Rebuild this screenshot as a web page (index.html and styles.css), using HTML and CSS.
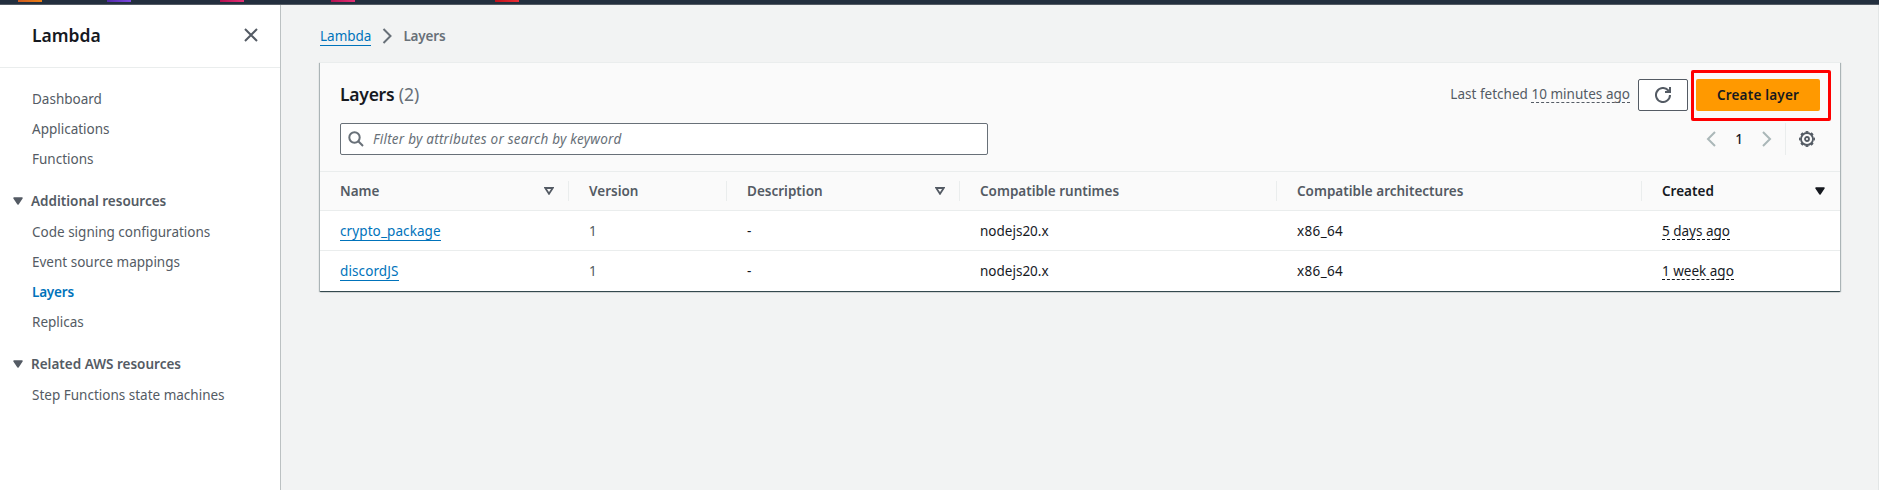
FILE: index.html
```html
<!DOCTYPE html>
<html lang="en">
<head>
<meta charset="utf-8">
<title>Layers - Lambda</title>
<link rel="stylesheet" href="styles.css">
</head>
<body>
<header class="topbar">
  <i class="service orange"></i><i class="service purple"></i><i class="service pink first"></i><i class="service pink"></i><i class="service red"></i>
</header>
<div class="layout">
  <aside class="sidebar">
    <div class="side-head">
      <h2 class="side-title">Lambda</h2>
      <svg class="close" width="16" height="16" viewBox="0 0 16 16"><path d="M2 2l12 12M14 2L2 14"/></svg>
    </div>
    <nav class="nav">
      <ul class="group">
        <li>Dashboard</li>
        <li>Applications</li>
        <li>Functions</li>
      </ul>
      <h3 class="section"><svg width="10" height="8" viewBox="0 0 10 8"><path d="M1 1h8L5 7z"/></svg>Additional resources</h3>
      <ul class="group">
        <li>Code signing configurations</li>
        <li>Event source mappings</li>
        <li class="active">Layers</li>
        <li>Replicas</li>
      </ul>
      <h3 class="section"><svg width="10" height="8" viewBox="0 0 10 8"><path d="M1 1h8L5 7z"/></svg>Related AWS resources</h3>
      <ul class="group">
        <li>Step Functions state machines</li>
      </ul>
    </nav>
  </aside>
  <main class="main">
    <div class="crumbs">
      <a class="link crumb-link">Lambda</a>
      <svg class="crumb-sep" width="16" height="16" viewBox="0 0 16 16"><path d="M4.5 1l7 7-7 7"/></svg>
      <span class="crumb-current">Layers</span>
    </div>
    <section class="card">
      <div class="card-head">
        <div class="row title-row">
          <h1 class="title">Layers <span class="count">(2)</span></h1>
          <div class="actions">
            <span class="fetched">Last fetched <span class="dashed">10 minutes ago</span></span>
            <button class="btn refresh"><svg width="16" height="16" viewBox="0 0 16 16"><path d="M15 8a7 7 0 1 1-1.9-4.8L15 5M15 0v5h-5"/></svg></button>
            <div class="create-wrap"><button class="btn create">Create layer</button><span class="highlight"></span></div>
          </div>
        </div>
        <div class="row filter-row">
          <div class="search">
            <svg width="16" height="16" viewBox="0 0 16 16"><circle cx="6.500" cy="6.500" r="5.200"/><path d="M10.300 10.300l4.700 4.700"/></svg>
            <span class="placeholder">Filter by attributes or search by keyword</span>
          </div>
          <div class="pager">
            <svg class="arrow" width="16" height="16" viewBox="0 0 16 16"><path d="M12 1L5 8l7 7"/></svg>
            <span class="page">1</span>
            <svg class="arrow" width="16" height="16" viewBox="0 0 16 16"><path d="M5 1l7 7-7 7"/></svg>
            <span class="settings"><svg width="16" height="16" viewBox="0 0 16 16"><circle cx="8" cy="8" r="6"/><circle class="teeth" cx="8" cy="8" r="7.200" pathLength="16"/><circle cx="8" cy="8" r="2"/></svg></span>
          </div>
        </div>
      </div>
      <div class="grid thead">
        <div class="th">Name<svg class="sort" width="10" height="8" viewBox="0 0 10 8"><path d="M1.200 1h7.600L5 6.800z"/></svg></div>
        <div class="th">Version</div>
        <div class="th">Description<svg class="sort" width="10" height="8" viewBox="0 0 10 8"><path d="M1.200 1h7.600L5 6.800z"/></svg></div>
        <div class="th">Compatible runtimes</div>
        <div class="th">Compatible architectures</div>
        <div class="th sorted">Created<svg class="sort" width="10" height="8" viewBox="0 0 10 8"><path d="M1 1h8L5 7z"/></svg></div>
      </div>
      <div class="grid tr">
        <div class="td"><a class="link">crypto_package</a></div>
        <div class="td muted">1</div>
        <div class="td">-</div>
        <div class="td">nodejs20.x</div>
        <div class="td arch">x86_64</div>
        <div class="td"><span class="dashed">5 days ago</span></div>
      </div>
      <div class="grid tr">
        <div class="td"><a class="link">discordJS</a></div>
        <div class="td muted">1</div>
        <div class="td">-</div>
        <div class="td">nodejs20.x</div>
        <div class="td arch">x86_64</div>
        <div class="td"><span class="dashed">1 week ago</span></div>
      </div>
    </section>
  </main>
</div>
</body>
</html>
```
FILE: styles.css
```css
* { box-sizing: border-box; }
body {
  margin: 0;
  height: 490px;
  overflow: hidden;
  display: flex;
  flex-direction: column;
  background: #f2f3f3;
  color: #16191f;
  font: 13.5px/20px "Noto Sans", "Open Sans", sans-serif;
}
h1, h2, h3, ul { margin: 0; padding: 0; list-style: none; }
svg { display: block; flex: none; fill: none; stroke: #545b64; stroke-width: 2; }

.topbar { flex: none; height: 5px; display: flex; background: #232f3e; border-bottom: 1px solid #545b64; }
.service { width: 24px; height: 2px; }
.orange { margin-left: 18px; background: linear-gradient(90deg, #cc5a20, #ec7f13); }
.purple { margin-left: 65px; background: linear-gradient(90deg, #5029a8, #7b48df); }
.pink { margin-left: 87px; background: linear-gradient(90deg, #b3104f, #e52f74); }
.pink.first { margin-left: 89px; }
.red { margin-left: 140px; background: linear-gradient(90deg, #bd1019, #ec2d35); }

.layout { flex: 1; display: flex; min-height: 0; }
.sidebar { flex: none; width: 281px; background: #fff; border-right: 1px solid #bcc1c2; }
.side-head { height: 63px; display: flex; justify-content: space-between; align-items: center; padding: 0 21px 2px 32px; border-bottom: 1px solid #eaeded; }
.side-title { font-size: 17.5px; letter-spacing: 0; font-weight: 600; }
.nav { padding-top: 21px; color: #545b64; }
.group { padding-left: 32px; }
.group li { height: 30px; line-height: 20px; padding-bottom: 10px; }
.active { color: #0073bb; font-weight: 600; letter-spacing: -0.2px; }
.section { display: flex; align-items: center; gap: 8px; margin: 12px 0 11px; padding-left: 13px; height: 20px; font-size: 13.5px; font-weight: 600; letter-spacing: 0; }
.section svg, .sorted svg { fill: #545b64; stroke-width: 1.5; stroke-linejoin: round; }

.main { flex: 1; padding: 21px 38px 0 39px; border-right: 1px solid #e3e6e6; }
.crumbs { display: flex; align-items: center; height: 20px; color: #687078; }
.crumb-sep { margin: 0 8px 0 8px; stroke: #687078; }
.crumb-current { font-weight: 600; letter-spacing: -0.2px; }
.link { color: #0073bb; border-bottom: 1px solid #0073bb; line-height: 18px; height: 19px; display: inline-block; }

.card { margin-top: 16px; background: #fff; border-top: 1px solid #eaeded; box-shadow: 0 1px 1px 0 rgba(0, 28, 36, .3), 1px 1px 1px 0 rgba(0, 28, 36, .25), -1px 1px 1px 0 rgba(0, 28, 36, .25), 0 1px 0 0 #879090; }
.card-head { height: 109px; padding: 16px 20px 0; background: #fafafa; border-bottom: 1px solid #eaeded; }
.row { display: flex; align-items: center; justify-content: space-between; height: 32px; }
.filter-row { margin-top: 12px; }
.title { margin-bottom: 2px; font-size: 17.5px; font-weight: 600; letter-spacing: -0.25px; }
.count { font-weight: 400; color: #687078; letter-spacing: 0; }
.actions { display: flex; align-items: center; }
.fetched { color: #545b64; margin: 0 8px 2px 0; letter-spacing: 0.02px; }
.dashed { display: inline-block; height: 18px; line-height: 18px; border-bottom: 1px dashed currentColor; }
.btn { height: 32px; border-radius: 2px; font: inherit; display: flex; align-items: center; justify-content: center; padding: 0; }
.refresh { width: 50px; border: 1px solid #545b64; background: #fff; }
.create-wrap { position: relative; margin-left: 8px; }
.create { width: 124px; border: 0; background: #f90; color: #16191f; font-weight: 600; letter-spacing: 0.2px; }
.highlight { position: absolute; inset: -9px -11px -10px -5px; border: 3px solid #f00; border-radius: 2px; }

.search { display: flex; align-items: center; width: 648px; height: 32px; padding-left: 7px; gap: 9px; background: #fff; border: 1px solid #687078; border-radius: 2px; }
.search svg { stroke: #687078; }
.placeholder { font-style: italic; color: #687078; letter-spacing: 0.24px; }
.pager { display: flex; align-items: center; height: 32px; }
.arrow { stroke: #aab7b8; }
.page { width: 39px; padding-left: 1px; text-align: center; font-weight: 500; }
.settings { display: flex; align-items: center; height: 32px; margin-left: 11px; padding: 0 5px 0 13px; border-left: 1px solid #eaeded; }
.settings svg { stroke-width: 1.8; }
.teeth { stroke-width: 1.6; stroke-dasharray: 1 1; stroke-dashoffset: 0.5; }

.grid { display: grid; grid-template-columns: 249px 158px 233px 317px 365px 1fr; align-items: center; }
.thead { height: 39px; background: #fafafa; border-bottom: 1px solid #eaeded; }
.th { display: flex; align-items: center; justify-content: space-between; height: 20px; padding: 0 14px 0 20px; border-right: 1px solid #eaeded; font-weight: 600; color: #545b64; letter-spacing: 0; }
.th:last-child { border: 0; padding-right: 15px; }
.sorted { color: #16191f; }
.sort { stroke-width: 1.8; }
.sorted svg { fill: #16191f; stroke: #16191f; }
.tr { height: 40px; border-bottom: 1px solid #eaeded; }
.tr:last-child { border: 0; }
.td { padding-left: 20px; line-height: 20px; }
.td .link { letter-spacing: 0.1px; }
.arch { letter-spacing: 0.35px; }
.muted { color: #545b64; }
```
